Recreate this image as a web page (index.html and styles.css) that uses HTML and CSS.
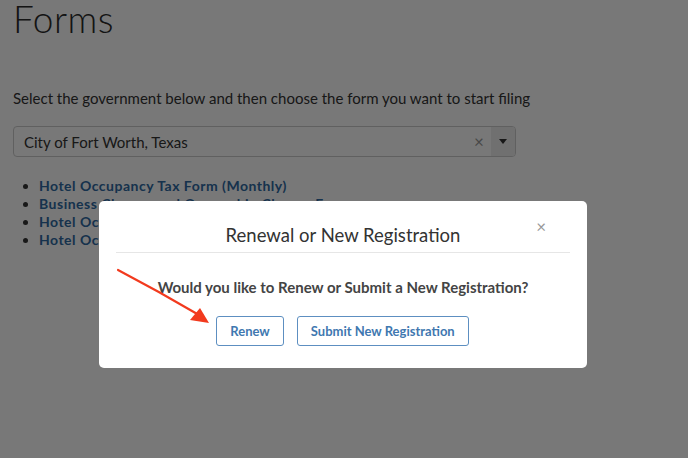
FILE: index.html
```html
<!DOCTYPE html>
<html>
<head>
<meta charset="utf-8">
<link rel="stylesheet" href="styles.css">
</head>
<body>
<div class="page">
  <h1 class="title">Forms</h1>
  <p class="intro">Select the government below and then choose the form you want to start filing</p>
  <div class="select">
    <span class="select-value">City of Fort Worth, Texas</span>
    <span class="select-clear">×</span>
    <span class="select-arrow"><svg width="8" height="5" viewBox="0 0 8 5"><path d="M0 0h8L4 5z" fill="#333"/></svg></span>
  </div>
  <ul class="forms">
    <li><a href="#">Hotel Occupancy Tax Form (Monthly)</a></li>
    <li><a href="#">Business Closure and Ownership Change Form</a></li>
    <li><a href="#">Hotel Occupancy Tax Registration</a></li>
    <li><a href="#">Hotel Occupancy Tax Renewal</a></li>
  </ul>
</div>
<div class="overlay">
  <div class="modal">
    <div class="modal-header">
      <h2 class="modal-title">Renewal or New Registration</h2>
      <span class="modal-close">×</span>
    </div>
    <div class="modal-body">
      <p class="question">Would you like to Renew or Submit a New Registration?</p>
      <div class="actions">
        <button class="btn">Renew</button>
        <button class="btn">Submit New Registration</button>
      </div>
    </div>
  </div>
  <svg class="pointer" width="688" height="458" viewBox="0 0 688 458">
    <path d="M118 270 Q160 292 199 315" stroke="#f23a1e" stroke-width="2.2" fill="none" stroke-linecap="round"/>
    <path d="M209 323 L190 320 L200 308 Z" fill="#f23a1e"/>
  </svg>
</div>
</body>
</html>
```

FILE: styles.css
```css
html, body {
  margin: 0;
  padding: 0;
  background: #fff;
  overflow: hidden;
}
body {
  font-family: "Lato", "Noto Sans", sans-serif;
  color: #333;
  width: 688px;
  height: 458px;
  position: relative;
}
.page {
  padding-left: 13px;
}
.title {
  margin: 0;
  font-size: 37px;
  font-weight: 300;
  line-height: 37px;
  letter-spacing: 0.5px;
  color: #2b2b2b;
}
.intro {
  margin: 51px 0 0;
  font-size: 15px;
  line-height: 20px;
  color: #333;
}
.select {
  margin-top: 18px;
  width: 501px;
  height: 29px;
  border: 1px solid #ccc;
  border-radius: 4px;
  display: flex;
  align-items: center;
  background: #fff;
  overflow: hidden;
}
.select-value {
  flex: 1;
  padding-left: 10px;
  font-size: 15px;
  color: #333;
}
.select-clear {
  width: 20px;
  font-size: 17px;
  color: #999;
  text-align: center;
  margin-right: 2px;
}
.select-arrow {
  width: 24px;
  height: 100%;
  background: #eee;
  display: flex;
  align-items: center;
  justify-content: center;
}
.forms {
  margin: 20px 0 0;
  padding-left: 26px;
  font-size: 14px;
  line-height: 18px;
}
.forms a {
  color: #2f6aa3;
  font-weight: 700;
  letter-spacing: 0.5px;
  text-decoration: none;
}
.overlay {
  position: absolute;
  inset: 0;
  background: rgba(0, 0, 0, 0.53);
}
.modal {
  position: absolute;
  left: 99px;
  top: 201px;
  width: 488px;
  height: 167px;
  background: #fff;
  border-radius: 5px;
  box-sizing: border-box;
}
.modal-header {
  margin: 0 17px;
  padding: 23px 0 6px;
  border-bottom: 1px solid #e6e6e6;
  position: relative;
}
.modal-title {
  margin: 0;
  font-size: 18.5px;
  line-height: 22px;
  font-weight: 400;
  text-align: center;
  color: #333;
}
.modal-close {
  position: absolute;
  right: 24px;
  top: 16px;
  font-size: 17px;
  line-height: 20px;
  color: #999;
}
.modal-body {
  padding: 24px 0 0;
  text-align: center;
}
.question {
  margin: 0;
  font-size: 15px;
  line-height: 20px;
  font-weight: 700;
  color: #444;
}
.actions {
  margin-top: 19px;
  display: flex;
  justify-content: center;
  gap: 13px;
  padding-right: 1px;
}
.btn {
  font-family: "Lato", "Noto Sans", sans-serif;
  font-size: 13px;
  font-weight: 700;
  color: #3f78b0;
  background: #fff;
  border: 1px solid #5d8fc1;
  border-radius: 3px;
  height: 30px;
  padding: 0 13px;
}
.pointer {
  position: absolute;
  left: 0;
  top: 0;
}
```
